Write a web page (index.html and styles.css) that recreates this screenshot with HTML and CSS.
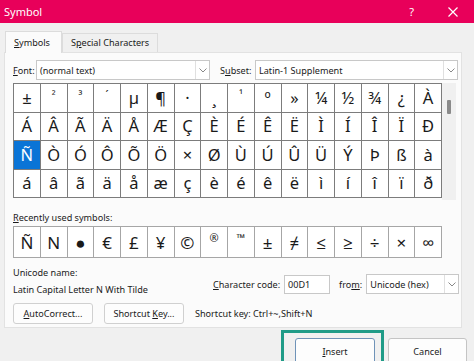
FILE: index.html
```html
<!DOCTYPE html>
<html lang="en">
<head>
  <meta charset="UTF-8">
  <title>Symbol</title>
  <link rel="stylesheet" href="styles.css">
</head>
<body>
  <div class="window">
    <div class="titlebar">
      <span class="title">Symbol</span>
      <span class="help">?</span>
      <svg class="close" width="10" height="10" viewBox="0 0 10 10"><path d="M0.5 0.5L9.5 9.5M9.5 0.5L0.5 9.5" stroke="#fff" stroke-width="1.2"/></svg>
    </div>
    <div class="tabs">
      <div class="tab active"><u>S</u>ymbols</div>
      <div class="tab">S<u>p</u>ecial Characters</div>
    </div>
    <div class="panel">
      <div class="fontrow">
        <label class="lbl font-lbl"><u>F</u>ont:</label>
        <div class="select font-select">
          <span class="val">(normal text)</span>
          <span class="arrow"><svg width="8" height="5" viewBox="0 0 8 5"><path d="M0.5 0.5L4 4L7.5 0.5" fill="none" stroke="#888" stroke-width="1"/></svg></span>
        </div>
        <label class="lbl subset-lbl">S<u>u</u>bset:</label>
        <div class="select subset-select">
          <span class="val">Latin-1 Supplement</span>
          <span class="arrow"><svg width="8" height="5" viewBox="0 0 8 5"><path d="M0.5 0.5L4 4L7.5 0.5" fill="none" stroke="#888" stroke-width="1"/></svg></span>
        </div>
      </div>

      <div class="gridrow">
        <div class="grid">
          <div>±</div><div class="sm">²</div><div class="sm">³</div><div class="sm">´</div><div>µ</div><div>¶</div><div>·</div><div>¸</div>
          <div class="sm">¹</div><div>º</div><div>»</div><div>¼</div><div>½</div><div>¾</div><div>¿</div><div>À</div>
          <div>Á</div><div>Â</div><div>Ã</div><div>Ä</div><div>Å</div><div>Æ</div><div>Ç</div><div>È</div>
          <div>É</div><div>Ê</div><div>Ë</div><div>Ì</div><div>Í</div><div>Î</div><div>Ï</div><div>Ð</div>
          <div class="sel">Ñ</div><div>Ò</div><div>Ó</div><div>Ô</div><div>Õ</div><div>Ö</div><div>×</div><div>Ø</div>
          <div>Ù</div><div>Ú</div><div>Û</div><div>Ü</div><div>Ý</div><div>Þ</div><div>ß</div><div>à</div>
          <div>á</div><div>â</div><div>ã</div><div>ä</div><div>å</div><div>æ</div><div>ç</div><div>è</div>
          <div>é</div><div>ê</div><div>ë</div><div>ì</div><div>í</div><div>î</div><div>ï</div><div>ð</div>
        </div>
        <div class="scrollbar"><div class="thumb"></div></div>
      </div>

      <div class="lbl recent-lbl"><u>R</u>ecently used symbols:</div>
      <div class="recent">
        <div>Ñ</div><div>N</div><div>●</div><div>€</div><div>£</div><div>¥</div><div>©</div><div class="sm">®</div>
        <div class="sm">™</div><div>±</div><div>≠</div><div>≤</div><div>≥</div><div>÷</div><div>×</div><div>∞</div>
      </div>

      <div class="inforow">
        <div class="names">
          <div class="lbl">Unicode name:</div>
          <div class="lbl">Latin Capital Letter N With Tilde</div>
        </div>
        <div class="coderow">
          <label class="lbl"><u>C</u>haracter code:</label>
          <div class="input">00D1</div>
          <label class="lbl from-lbl">fro<u>m</u>:</label>
          <div class="select from-select">
            <span class="val">Unicode (hex)</span>
            <span class="arrow"><svg width="8" height="5" viewBox="0 0 8 5"><path d="M0.5 0.5L4 4L7.5 0.5" fill="none" stroke="#888" stroke-width="1"/></svg></span>
          </div>
        </div>
      </div>

      <div class="btnrow">
        <div class="btn"><span><u>A</u>utoCorrect...</span></div>
        <div class="btn"><span>Shortcut <u>K</u>ey...</span></div>
        <span class="lbl shortcut">Shortcut key: Ctrl+~,Shift+N</span>
      </div>
    </div>

    <div class="footer">
      <div class="focus"><div class="btn big"><span><u>I</u>nsert</span></div></div>
      <div class="btn big"><span>Cancel</span></div>
    </div>
  </div>
</body>
</html>
```

FILE: styles.css
```css
*{margin: 0; padding: 0; box-sizing: border-box;}
body{width: 474px; height: 361px; overflow: hidden; background: #f0f0f0; font-family: "Noto Sans", "Open Sans", sans-serif; color: #1a1a1a;}
u{text-decoration: underline; text-underline-offset: 1px;}

.titlebar{height: 23px; background: #e8005a; color: #fff; display: flex; align-items: center; padding: 0 0 0 4px;}
.title{font-size: 11px; flex: 1;}
.help{font-size: 11px; margin-right: 34px;}
.close{margin-right: 16px;}

.tabs{display: flex; height: 29px; padding: 8px 0 0 5px; align-items: flex-end;}
.tab{font-size: 9.1px; height: 19px; line-height: 18px; padding: 0 8px; border: 1px solid #dcdcdc; border-bottom: none; background: #f0f0f0; white-space: nowrap;}
.tab.active{height: 22px; line-height: 21px; padding: 0 11px 0 8px; background: #fbfbfb; position: relative; top: 1px; z-index: 1;}

.panel{margin: 0 12px 0 4px; height: 276px; background: #fbfbfb; border: 1px solid #e2e2e2; padding: 7px 0 0 8px;}
.lbl{font-size: 9.1px; line-height: 13px; white-space: nowrap;}

.fontrow{display: flex; align-items: center; height: 20px;}
.select{display: flex; align-items: center; height: 20px; background: #fff; border: 1px solid #c8c8c8;}
.select .val{flex: 1; font-size: 9.1px; padding-left: 3px; white-space: nowrap;}
.select .arrow{width: 14px; height: 18px; border-left: 1px solid #e0e0e0; display: flex; align-items: center; justify-content: center;}
.font-lbl{width: 23px;}
.font-select{width: 174px;}
.subset-lbl{width: 35px; margin-left: 10px;}
.subset-select{width: 203px;}

.gridrow{display: flex; margin-top: 3px;}
.grid{width: 429px; height: 115px; display: grid; grid-template-columns: repeat(16, 1fr); grid-template-rows: repeat(4, 1fr); gap: 1px; padding: 1px; background: #7c7c7c;}
.grid div, .recent div{background: #fff; display: flex; align-items: center; justify-content: center; font-size: 16.5px; line-height: 1;}
.grid div.sm, .recent div.sm{font-size: 11px; align-items: flex-start; padding-top: 5px;}
.grid div.sel{background: #0a74d6; color: #fff;}
.scrollbar{width: 14px; height: 117px; background: #f0f0f0; position: relative;}
.thumb{position: absolute; left: 5px; top: 17px; width: 4px; height: 14px; background: #8a8a8a; border-radius: 1px;}

.recent-lbl{margin-top: 11px; height: 14px;}
.recent{width: 429px; height: 32px; margin-top: 1px; display: grid; grid-template-columns: repeat(16, 1fr); gap: 1px; padding: 1px; background: #a6a6a6;}
.recent div{font-size: 17px;}

.inforow{display: flex; margin-top: 8px; height: 30px;}
.names{width: 200px; flex-shrink: 0; display: flex; flex-direction: column; gap: 4px;}
.coderow{display: flex; align-items: center; height: 20px; margin-top: 8px; flex-shrink: 0;}
.input{width: 46px; height: 19px; margin-left: 4px; background: #fff; border: 1px solid #c8c8c8; font-size: 9.1px; padding: 2px 3px;}
.from-lbl{margin-left: 9px;}
.from-select{width: 93px; margin-left: 4px;}

.btnrow{display: flex; align-items: center; margin-top: 7px;}
.btn{font-size: 9.1px; height: 21px; width: 80px; display: flex; align-items: center; justify-content: center; background: #fdfdfd; border: 1px solid #d0d0d0; border-radius: 3px; margin-right: 11px; white-space: nowrap;}

.footer{display: flex; padding: 2px 0 0 281px;}
.focus{border: 3px solid #1f9b87; padding: 5px 6px 0 11px; height: 34px;}
.btn.big{width: 80px; height: 26px; margin-right: 0; border-color: #c4c4c4;}
.focus .btn.big{border-color: #6f93b8;}
.footer > .btn.big{width: 79px; margin-top: 8px; margin-left: 4px;}
```
